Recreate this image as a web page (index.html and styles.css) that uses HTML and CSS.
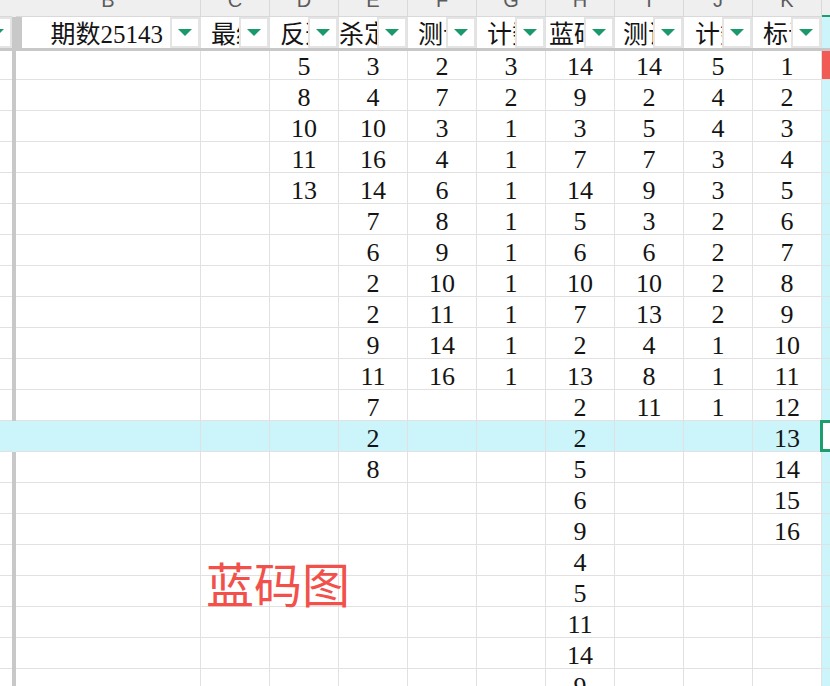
FILE: index.html
```html
<!DOCTYPE html>
<html lang="zh-CN">
<head>
    <meta charset="UTF-8">
    <meta name="viewport" content="width=device-width, initial-scale=1.0">
    <title>蓝码图</title>
    <link rel="stylesheet" href="styles.css">
</head>
<body>
    <div class="sheet">
        <div class="row letters" id="letters"></div>
        <div class="row filters" id="filters"></div>
        <div class="freeze-line"></div>
        <div id="rows"></div>

        <!-- floating text box -->
        <div class="float-text">蓝码图</div>
    </div>

    <script>
        const cols = ['B', 'C', 'D', 'E', 'F', 'G', 'H', 'I', 'J', 'K'];
        const headers = {
            B: '期数25143', C: '最终', D: '反选', E: '杀定码', F: '测试',
            G: '计数', H: '蓝码', I: '测试', J: '计数', K: '标识'
        };
        const data = {
            D: [5, 8, 10, 11, 13],
            E: [3, 4, 10, 16, 14, 7, 6, 2, 2, 9, 11, 7, 2, 8],
            F: [2, 7, 3, 4, 6, 8, 9, 10, 11, 14, 16],
            G: [3, 2, 1, 1, 1, 1, 1, 1, 1, 1, 1],
            H: [14, 9, 3, 7, 14, 5, 6, 10, 7, 2, 13, 2, 2, 5, 6, 9, 4, 5, 11, 14, 9],
            I: [14, 2, 5, 7, 9, 3, 6, 10, 13, 4, 8, 11],
            J: [5, 4, 4, 3, 3, 2, 2, 2, 2, 1, 1, 1],
            K: [1, 2, 3, 4, 5, 6, 7, 8, 9, 10, 11, 12, 13, 14, 15, 16]
        };
        const activeRow = 12; // row 13 is selected

        function cell(cls, html) {
            const div = document.createElement('div');
            div.className = 'cell ' + cls;
            if (html) div.innerHTML = html;
            return div;
        }

        const btn = '<span class="filter-btn"><i></i></span>';

        // column letters
        const letters = document.getElementById('letters');
        letters.appendChild(cell('a'));
        letters.appendChild(cell('sep'));
        cols.forEach(c => letters.appendChild(cell('col-' + c, '<span>' + c + '</span>')));
        letters.appendChild(cell('l'));

        // filter header row
        const filters = document.getElementById('filters');
        filters.appendChild(cell('a', btn));
        filters.appendChild(cell('sep'));
        cols.forEach(c => {
            filters.appendChild(cell('col-' + c, '<span class="title">' + headers[c] + '</span>' + btn));
        });
        filters.appendChild(cell('l'));

        // data rows
        const rows = document.getElementById('rows');
        for (let r = 0; r < 22; r++) {
            const row = document.createElement('div');
            row.className = 'row data' + (r === 0 ? ' first' : '') + (r === activeRow ? ' hl' : '');
            row.appendChild(cell('a'));
            row.appendChild(cell('sep'));
            cols.forEach(c => {
                const v = data[c] && data[c][r] !== undefined ? data[c][r] : '';
                row.appendChild(cell('col-' + c, String(v)));
            });
            let lcls = 'l';
            if (r === 0) lcls += ' red';
            if (r === activeRow) lcls += ' sel';
            row.appendChild(cell(lcls));
            rows.appendChild(row);
        }
    </script>
</body>
</html>
```

FILE: styles.css
```css
body {
    margin: 0;
    width: 830px;
    height: 686px;
    overflow: hidden;
    background-color: #fff;
    font-family: "Liberation Serif", "Noto Sans CJK SC", serif;
    color: #141414;
}

.sheet {
    position: relative;
}

.row {
    display: grid;
    grid-template-columns: 12px 4px 185px repeat(9, 69px) 1fr;
}

.cell {
    box-sizing: border-box;
    border-right: 1px solid #e1e1e1;
    border-bottom: 1px solid #e1e1e1;
    overflow: hidden;
    white-space: nowrap;
    position: relative;
}

.cell.a,
.cell.l {
    border-right: none;
}

.cell.sep {
    border: none;
    background-color: #c8c8c8;
}

/* column letters (scrolled, only the lower half shows) */
.letters .cell {
    height: 17px;
    background-color: #efefef;
    border-color: #d9d9d9;
    font-family: "Liberation Sans", Arial, sans-serif;
    font-size: 20px;
    color: #5c5c5c;
    text-align: center;
}

.letters .cell span {
    display: block;
    line-height: 20px;
    margin-top: -10px;
}

.letters .cell.l {
    border-bottom: 2px solid #1f9d6c;
}

/* filter header row */
.filters .cell {
    height: 31px;
    border-bottom: none;
    display: flex;
    align-items: flex-end;
    font-size: 25px;
    line-height: 26px;
    padding-left: 10px;
}

.filters .cell.a {
    padding-left: 0;
}

.filters .cell.col-B {
    justify-content: flex-end;
    padding-left: 0;
    padding-right: 37px;
}

.filters .cell.col-E {
    padding-left: 0;
}

.filters .cell.col-H {
    padding-left: 3px;
}

.filters .cell.col-I {
    padding-left: 8px;
}

.filters .cell.col-J {
    padding-left: 11px;
}

.filters .cell.l {
    padding: 0;
    background-color: #cbf5fb;
}

.filter-btn {
    position: absolute;
    top: 0;
    right: 0;
    width: 30px;
    height: 31px;
    box-sizing: border-box;
    border: 2px solid #e4e4e4;
    background-color: #fff;
    display: flex;
    align-items: center;
    justify-content: center;
}

.filter-btn i {
    width: 0;
    height: 0;
    border-left: 7px solid transparent;
    border-right: 7px solid transparent;
    border-top: 7px solid #1a9a6a;
}

.freeze-line {
    height: 3px;
    background-color: #c8c8c8;
}

/* data rows */
.data .cell {
    height: 31px;
    display: flex;
    align-items: flex-end;
    justify-content: center;
    font-size: 26px;
    line-height: 24px;
}

.data.first .cell {
    height: 29px;
}

.data.hl .cell {
    background-color: #cbf5fb;
}

.data .cell.l {
    background-color: #cbf5fb;
}

.data .cell.l.red {
    background-color: #f15b56;
}

.data.hl .cell.l.sel {
    background-color: #fff;
    overflow: visible;
}

.cell.sel::after {
    content: "";
    position: absolute;
    top: -1px;
    bottom: -1px;
    left: -2px;
    right: -4px;
    border: 3px solid #1f9d6c;
}

.float-text {
    position: absolute;
    left: 206px;
    top: 558px;
    font-family: "Noto Sans CJK SC", sans-serif;
    font-size: 48px;
    line-height: 1;
    color: #f2504b;
}
```
